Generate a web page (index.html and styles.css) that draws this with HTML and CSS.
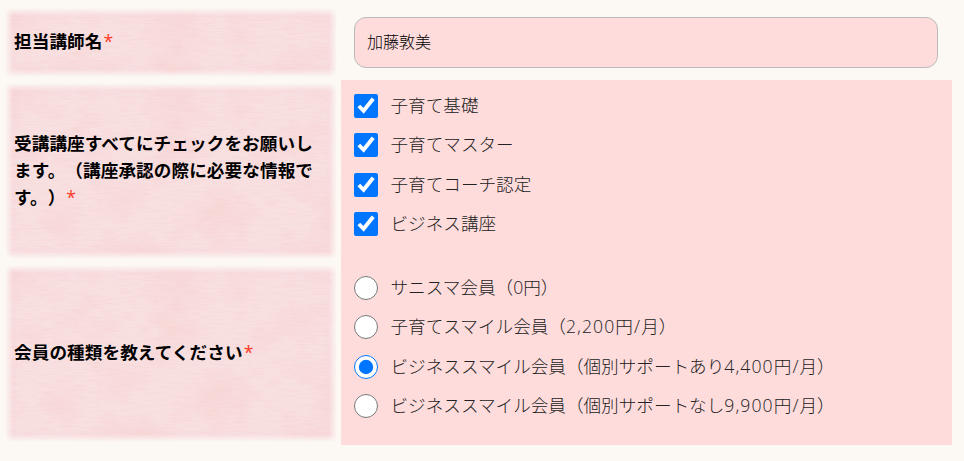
FILE: index.html
```
<!DOCTYPE html>
<html lang="ja">
<head>
    <meta charset="UTF-8">
    <meta name="viewport" content="width=device-width, initial-scale=1.0">
    <title>会員フォーム</title>
    <link rel="stylesheet" href="styles.css">
</head>
<body>
    <form class="form">
        <div class="row row-name">
            <div class="heading">
                <label for="teacher">担当講師名<span class="required">*</span></label>
            </div>
            <div class="field">
                <input class="text-input" type="text" id="teacher" value="加藤敦美">
            </div>
        </div>

        <div class="row row-course">
            <div class="heading">
                <p>受講講座すべてにチェックをお願いします。（講座承認の際に必要な情報です。）<span class="required">*</span></p>
            </div>
            <div class="field options">
                <label class="option"><input type="checkbox" checked><span>子育て基礎</span></label>
                <label class="option"><input type="checkbox" checked><span>子育てマスター</span></label>
                <label class="option"><input type="checkbox" checked><span>子育てコーチ認定</span></label>
                <label class="option"><input type="checkbox" checked><span>ビジネス講座</span></label>
            </div>
        </div>

        <div class="row row-member">
            <div class="heading">
                <p>会員の種類を教えてください<span class="required">*</span></p>
            </div>
            <div class="field options">
                <label class="option"><input type="radio" name="member"><span>サニスマ会員（0円）</span></label>
                <label class="option"><input type="radio" name="member"><span>子育てスマイル会員（<span class="price">2,200円/</span>月）</span></label>
                <label class="option"><input type="radio" name="member" checked><span>ビジネススマイル会員（個別サポートあり<span class="price">4,400円/</span>月）</span></label>
                <label class="option"><input type="radio" name="member"><span>ビジネススマイル会員（個別サポートなし<span class="price">9,900円/</span>月）</span></label>
            </div>
        </div>
    </form>
</body>
</html>
```
FILE: styles.css
```
* {
    box-sizing: border-box;
}

body {
    margin: 0;
    background: #fcf9f4;
    color: #222;
    font-family: "Open Sans", "Noto Sans CJK JP", sans-serif;
    font-size: 17.6px;
    font-weight: 300;
    text-spacing-trim: space-all;
    overflow: hidden;
}

.form {
    width: 952px;
    padding-top: 5px;
}

.row {
    display: grid;
    grid-template-columns: 341px 1fr;
}

.row-name {
    height: 75px;
}

.row-course {
    height: 182px;
}

.row-member {
    height: 183px;
}

.heading {
    position: relative;
    isolation: isolate;
    display: flex;
    align-items: center;
    padding: 0 20px 2px 14px;
    color: #000;
    font-weight: bold;
    letter-spacing: 0.1px;
    line-height: 27px;
}

.heading p {
    margin: 0;
}

/* pink cloth with soft edges */
.heading::before {
    content: "";
    position: absolute;
    z-index: -1;
    inset: 3px 4px 3px 5px;
    background:
        url("data:image/svg+xml,%3Csvg xmlns='http://www.w3.org/2000/svg' width='341' height='183'%3E%3Cfilter id='a' x='0' y='0' width='100%25' height='100%25'%3E%3CfeTurbulence type='fractalNoise' baseFrequency='.02 .025' numOctaves='5' seed='4'/%3E%3CfeColorMatrix values='0 0 0 0 .93 0 0 0 0 .55 0 0 0 0 .55 2 0 0 0 -.82'/%3E%3C/filter%3E%3Cfilter id='b' x='0' y='0' width='100%25' height='100%25'%3E%3CfeTurbulence type='fractalNoise' baseFrequency='.06 .5' numOctaves='2' seed='8'/%3E%3CfeColorMatrix values='0 0 0 0 .93 0 0 0 0 .5 0 0 0 0 .5 1.4 0 0 0 -.6'/%3E%3C/filter%3E%3Crect width='341' height='183' filter='url(%23a)' opacity='.3'/%3E%3Crect width='341' height='183' filter='url(%23b)' opacity='.3'/%3E%3C/svg%3E") 0 0 / 332px 177px,
        #f8e0e1;
    box-shadow: inset 0 0 14px rgba(247, 190, 195, 0.5);
    -webkit-mask:
        linear-gradient(to right, transparent, #000 8px, #000 calc(100% - 8px), transparent),
        linear-gradient(transparent, #000 8px, #000 calc(100% - 8px), transparent);
    -webkit-mask-composite: source-in;
    mask-composite: intersect;
}

.required {
    padding-left: 1px;
    color: #ff3a24;
    font-weight: normal;
}

.field {
    padding: 12px 14px 12px 13px;
}

.text-input {
    display: block;
    width: 100%;
    height: 51px;
    padding: 0 12px 4px;
    border: 1px solid #bbb;
    border-radius: 12px;
    background: #ffdcdc;
    color: #000;
    font-family: inherit;
    font-size: 16px;
    font-weight: 300;
}

.options {
    display: flex;
    flex-direction: column;
    background: #ffdcdc;
    padding-top: 6px;
}

.option {
    display: flex;
    align-items: center;
    flex: none;
    height: 39.5px;
    white-space: nowrap;
}

.option > span {
    padding-bottom: 3px;
}

.option input {
    width: 24px;
    height: 24px;
    margin: 0 12.5px 0 0;
}

.price {
    letter-spacing: 1.1px;
}
```
